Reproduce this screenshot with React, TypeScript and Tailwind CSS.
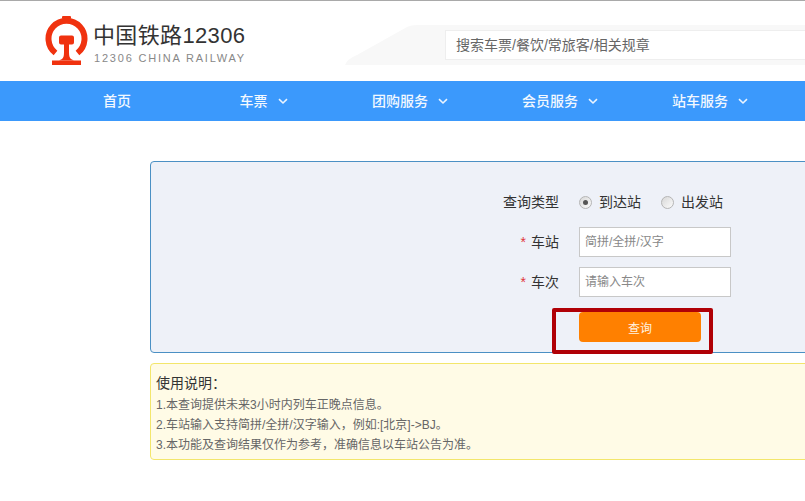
import React from "react";

const FONT = { fontFamily: '"Liberation Sans", "Noto Sans CJK SC", sans-serif' };

function Logo() {
  return (
    <svg width="44" height="52" viewBox="0 0 44 52" className="shrink-0">
      <path d="M11.5 37 A 18 18 0 1 1 33.5 37" fill="none" stroke="#f0320f" strokeWidth="6" />
      <rect x="18" y="0" width="9" height="3" rx="1" fill="#f0320f" />
      <path d="M15 21.5 q0 -2 2 -2 h11 q2 0 2 2 v5 q0 2 -2 2 h-3 v8 q0 5 2 6.5 l3 1.5 h-15 l3 -1.5 q2 -1.5 2 -6.5 v-8 h-3 q-2 0 -2 -2 z" fill="#f0320f" />
      <rect x="8" y="44.5" width="29" height="4.5" fill="#f0320f" />
    </svg>
  );
}

function Chevron() {
  return (
    <svg width="10" height="7" viewBox="0 0 10 7" className="ml-[10px]">
      <path d="M1 1.2 L5 5 L9 1.2" fill="none" stroke="#eaf4ff" strokeWidth="1.6" />
    </svg>
  );
}

function NavItem({ label, width, chevron = true }: { label: string; width: string; chevron?: boolean }) {
  return (
    <div className={`flex items-center justify-center ${width}`}>
      <span className="text-[14px] font-medium text-[#f2f8ff]">{label}</span>
      {chevron && <Chevron />}
    </div>
  );
}

function Radio({ checked }: { checked?: boolean }) {
  return (
    <span className="flex h-[13px] w-[13px] items-center justify-center rounded-full border border-[#b5b5b5] bg-gradient-to-br from-[#d8d8d8] to-[#fbfbfb]">
      {checked && <span className="h-[5px] w-[5px] rounded-full bg-[#555]" />}
    </span>
  );
}

function Field({ label, placeholder }: { label: string; placeholder: string }) {
  return (
    <div className="flex h-[30px] items-center">
      <div className="w-[428px] pr-[20px] text-right text-[14px] text-[#333]">
        <span className="mr-[5px] text-[#e0353b]">*</span>
        {label}
      </div>
      <div className="flex h-[30px] w-[152px] items-center border border-[#c8c8c8] bg-white pl-[5px] text-[12px] text-[#888]">
        {placeholder}
      </div>
    </div>
  );
}

export default function App() {
  return (
    <div className="relative h-[501px] w-[805px] overflow-hidden bg-white" style={FONT}>
      <header className="relative h-[81px] border-t border-[#a9a9a9]">
        <svg width="460" height="40" viewBox="0 0 460 40" className="absolute left-[345px] top-[24px]">
          <path d="M0 40 Q 2 34 12 30 L 62 2 Q 66 0 72 0 H 460 V 40 Z" fill="#f8f8f8" />
        </svg>
        <div className="relative flex items-start pl-[44px] pt-[15px]">
          <Logo />
          <div className="ml-[6px] flex flex-col">
            <div className="-ml-px h-[36px] text-[22px] leading-[39px] tracking-[0.35px] text-[#333]">中国铁路12306</div>
            <div className="text-[11px] leading-[13px] tracking-[1.8px] text-[#888]">12306 CHINA RAILWAY</div>
          </div>
          <div className="absolute left-[445px] top-[29px] flex h-[30px] w-[380px] items-center border border-[#eeeeee] bg-white pl-[10px] text-[14px] text-[#666]">
            搜索车票/餐饮/常旅客/相关规章
          </div>
        </div>
      </header>

      <nav className="flex h-[40px] items-center bg-[#3b99fc] pl-[42px]">
        <NavItem label="首页" width="w-[150px]" chevron={false} />
        <NavItem label="车票" width="w-[143px]" />
        <NavItem label="团购服务" width="w-[150px]" />
        <NavItem label="会员服务" width="w-[150px]" />
        <NavItem label="站车服务" width="w-[150px]" />
      </nav>

      <main className="ml-[150px] mt-[40px] w-[760px]">
        <section className="h-[192px] rounded-[4px] border border-[#4b90c4] bg-[#eef1f8] pt-[25px]">
          <div className="flex h-[30px] items-center">
            <div className="w-[428px] pr-[20px] text-right text-[14px] text-[#333]">查询类型</div>
            <Radio checked />
            <span className="ml-[7px] w-[62px] text-[14px] text-[#333]">到达站</span>
            <Radio />
            <span className="ml-[7px] text-[14px] text-[#333]">出发站</span>
          </div>
          <div className="mt-[10px] flex flex-col gap-[10px]">
            <Field label="车站" placeholder="简拼/全拼/汉字" />
            <Field label="车次" placeholder="请输入车次" />
          </div>
          <div className="ml-[428px] mt-[15px] flex h-[30px] w-[122px] items-center justify-center rounded-[4px] bg-[#ff8000] pt-[3px] text-[12px] text-[#fff3e0]">
            查询
          </div>
        </section>

        <section className="mt-[10px] h-[97px] rounded-[4px] border border-[#f3e66b] bg-[#fffbe6] pl-[5px] pt-[9px]">
          <h2 className="text-[14px] leading-[20px] text-[#333]">使用说明：</h2>
          <div className="mt-[2px] text-[12px] leading-[20px] text-[#666]">
            <p>1.本查询提供未来3小时内列车正晚点信息。</p>
            <p>2.车站输入支持简拼/全拼/汉字输入，例如:[北京]-&gt;BJ。</p>
            <p>3.本功能及查询结果仅作为参考，准确信息以车站公告为准。</p>
          </div>
        </section>
      </main>

      <div className="absolute left-[552px] top-[308px] h-[46px] w-[161px] rounded-[2px] border-[4px] border-[#b00006]" />
    </div>
  );
}
